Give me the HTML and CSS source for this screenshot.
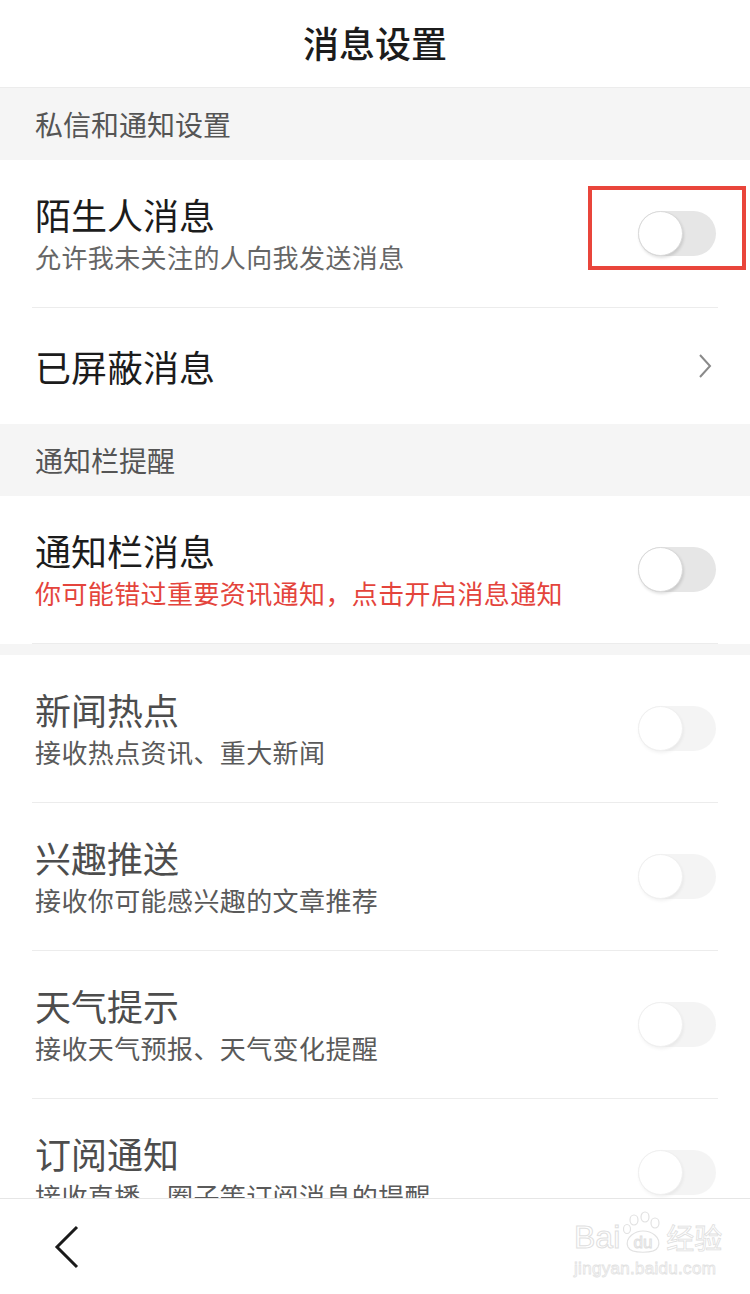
FILE: index.html
```
<!DOCTYPE html>
<html lang="zh-CN">
<head>
    <meta charset="UTF-8">
    <meta name="viewport" content="width=device-width, initial-scale=1.0">
    <title>消息设置</title>
    <link rel="stylesheet" href="styles.css">
</head>
<body>

<div class="page">
    <div class="content">
        <header class="top-bar">
            <h1>消息设置</h1>
        </header>

        <div class="section-label">私信和通知设置</div>

        <div class="row">
            <div class="row-text">
                <div class="row-title">陌生人消息</div>
                <div class="row-sub">允许我未关注的人向我发送消息</div>
            </div>
            <div class="switch-wrap">
                <div class="switch"><span class="knob"></span></div>
                <div class="mark-box"></div>
            </div>
        </div>

        <div class="row row-link no-line">
            <div class="row-title">已屏蔽消息</div>
            <svg class="chevron" width="16" height="26" viewBox="0 0 16 26">
                <path d="M3 2 L13 13 L3 24" fill="none" stroke="#8a8a8a" stroke-width="2"/>
            </svg>
        </div>

        <div class="section-label">通知栏提醒</div>

        <div class="row">
            <div class="row-text">
                <div class="row-title">通知栏消息</div>
                <div class="row-sub warn">你可能错过重要资讯通知，点击开启消息通知</div>
            </div>
            <div class="switch"><span class="knob"></span></div>
        </div>

        <div class="gap"></div>

        <!-- greyed out until notifications are turned on -->
        <div class="row disabled">
            <div class="row-text">
                <div class="row-title">新闻热点</div>
                <div class="row-sub">接收热点资讯、重大新闻</div>
            </div>
            <div class="switch"><span class="knob"></span></div>
        </div>

        <div class="row disabled">
            <div class="row-text">
                <div class="row-title">兴趣推送</div>
                <div class="row-sub">接收你可能感兴趣的文章推荐</div>
            </div>
            <div class="switch"><span class="knob"></span></div>
        </div>

        <div class="row disabled">
            <div class="row-text">
                <div class="row-title">天气提示</div>
                <div class="row-sub">接收天气预报、天气变化提醒</div>
            </div>
            <div class="switch"><span class="knob"></span></div>
        </div>

        <div class="row disabled">
            <div class="row-text">
                <div class="row-title">订阅通知</div>
                <div class="row-sub">接收直播、圈子等订阅消息的提醒</div>
            </div>
            <div class="switch"><span class="knob"></span></div>
        </div>
    </div>

    <footer class="bottom-bar">
        <svg class="back" width="30" height="46" viewBox="0 0 30 46">
            <path d="M25 3 L5 23 L25 43" fill="none" stroke="#1a1a1a" stroke-width="3"/>
        </svg>

        <div class="watermark">
            <div class="wm-logo">
                <span>Bai</span>
                <span class="wm-paw">
                    <svg width="46" height="46" viewBox="0 0 46 46">
                        <g fill="none" stroke="#e2e2e2" stroke-width="1.2">
                            <ellipse cx="14" cy="9" rx="4" ry="5"/>
                            <ellipse cx="25" cy="6" rx="4" ry="5"/>
                            <ellipse cx="35" cy="12" rx="4" ry="5"/>
                            <ellipse cx="7" cy="18" rx="3.5" ry="4.5"/>
                            <path d="M8 36 C4 26 16 20 23 20 C31 20 42 26 38 36 C35 43 11 43 8 36 Z"/>
                        </g>
                        <text x="23" y="37" text-anchor="middle">du</text>
                    </svg>
                </span>
                <span>经验</span>
            </div>
            <div class="wm-url">jingyan.baidu.com</div>
        </div>
    </footer>
</div>

</body>
</html>
```

FILE: styles.css
```
body {
    margin: 0;
    font-family: "Noto Sans CJK SC", "Noto Sans", sans-serif;
    background-color: #fff;
    color: #1f1f1f;
}

.page {
    height: 100vh;
    display: flex;
    flex-direction: column;
}

.content {
    flex: 1;
    overflow: hidden;
}

.top-bar {
    height: 88px;
    display: flex;
    align-items: center;
    justify-content: center;
    padding-bottom: 4px;
    border-bottom: 1px solid #ececec;
    box-sizing: border-box;
}

.top-bar h1 {
    margin: 0;
    font-size: 36px;
    font-weight: 500;
    color: #1c1c1c;
}

.section-label {
    height: 72px;
    display: flex;
    align-items: center;
    padding-left: 35px;
    background-color: #f5f5f5;
    font-size: 28px;
    color: #555;
}

.row {
    height: 148px;
    margin: 0 32px;
    padding: 0 2px 0 3px;
    display: flex;
    align-items: center;
    justify-content: space-between;
    border-bottom: 1px solid #ececec;
    box-sizing: border-box;
}

.row.no-line {
    border-bottom: none;
}

.row-link {
    height: 116px;
}

.row-title {
    font-size: 36px;
    line-height: 46px;
    color: #1c1c1c;
}

.row-sub {
    font-size: 26px;
    line-height: 40px;
    color: #666;
    letter-spacing: 0.4px;
}

.row-sub.warn {
    color: #e4443c;
}

.chevron {
    margin-right: 3px;
}

.gap {
    height: 11px;
    background-color: #f5f5f5;
}

.disabled .row-title {
    color: #4d4d4d;
}

.disabled .row-sub {
    color: #5a5a5a;
}

.disabled .switch {
    opacity: 0.4;
}

.switch-wrap {
    position: relative;
}

.switch {
    width: 78px;
    height: 45px;
    border-radius: 23px;
    background-color: #e6e6e6;
    position: relative;
}

.knob {
    position: absolute;
    left: 0;
    top: 0;
    width: 45px;
    height: 45px;
    border-radius: 50%;
    background-color: #fff;
    border: 1px solid #dadada;
    box-sizing: border-box;
    box-shadow: 1px 2px 3px rgba(0, 0, 0, 0.12);
}

.mark-box {
    position: absolute;
    left: -50px;
    top: -25px;
    width: 158px;
    height: 84px;
    border: 4px solid #e9453b;
    box-sizing: border-box;
}

.bottom-bar {
    height: 96px;
    border-top: 1px solid #e6e6e6;
    box-sizing: border-box;
    display: flex;
    align-items: center;
    padding-left: 52px;
    position: relative;
}

.watermark {
    position: absolute;
    left: 574px;
    top: 12px;
    color: transparent;
    -webkit-text-stroke: 1px #e0e0e0;
    font-family: "Liberation Sans", sans-serif;
}

.wm-logo {
    display: flex;
    align-items: flex-end;
    font-size: 32px;
    line-height: 40px;
    height: 46px;
}

.wm-logo span:last-child {
    font-family: "Noto Sans CJK SC", sans-serif;
    font-size: 28px;
    -webkit-text-stroke: 0.8px #e0e0e0;
}

.wm-paw svg {
    display: block;
}

.wm-paw text {
    font-size: 17px;
    fill: none;
    stroke: #e0e0e0;
    stroke-width: 1;
    font-family: "Liberation Sans", sans-serif;
}

.wm-url {
    font-size: 17px;
    letter-spacing: 0.3px;
    margin-top: 2px;
    -webkit-text-stroke: 0.8px #e2e2e2;
}
```
